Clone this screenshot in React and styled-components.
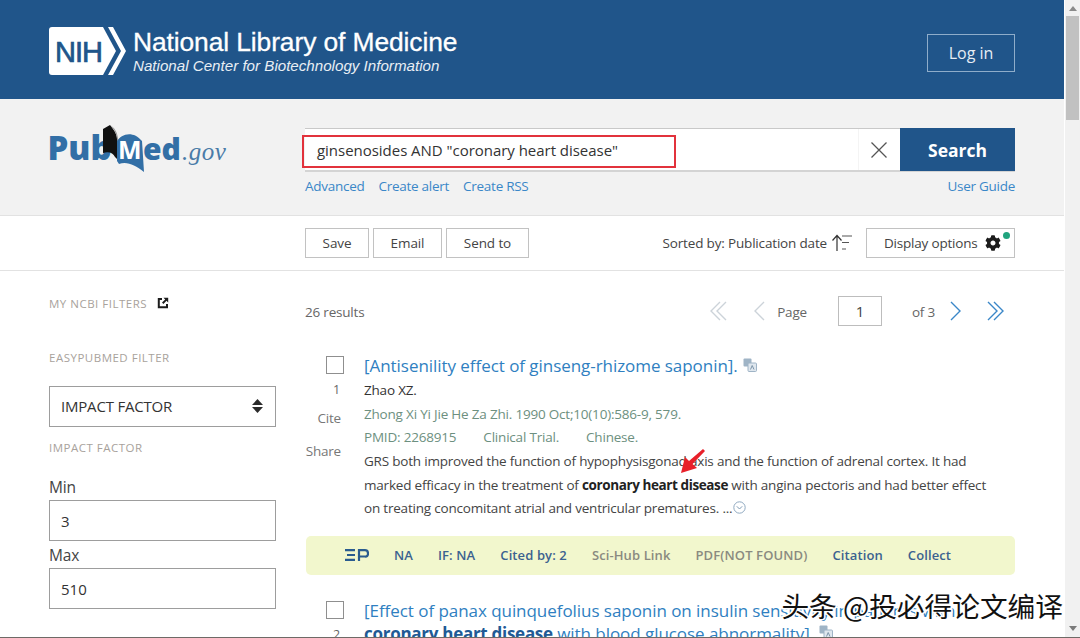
import styled, { createGlobalStyle } from 'styled-components';
import { FaCog } from 'react-icons/fa';

const GlobalStyle = createGlobalStyle`
  html, body {
    margin: 0;
    padding: 0;
    background: #fff;
    overflow: hidden;
  }
  * {
    box-sizing: border-box;
  }
`;

const BODY_FONT = `"Open Sans", "Noto Sans", sans-serif`;

const Page = styled.div`
  position: relative;
  display: flex;
  width: 1080px;
  height: 638px;
  overflow: hidden;
  font-family: ${BODY_FONT};
  color: #333;
`;

const Content = styled.div`
  width: 1064px;
  flex: none;
`;

const ScrollBar = styled.div`
  width: 16px;
  flex: none;
  display: flex;
  flex-direction: column;
  align-items: center;
  background: #f1f1f1;
  border-left: 1px solid #fff;
`;

const ScrollArrow = styled.div`
  width: 0;
  height: 0;
  margin: ${props => props.$down ? "auto 0 7px" : "6px 0 5px"};
  border-left: 4px solid transparent;
  border-right: 4px solid transparent;
  border-bottom: ${props => props.$down ? "none" : "5px solid #8a8a8a"};
  border-top: ${props => props.$down ? "5px solid #7a7a7a" : "none"};
`;

const ScrollThumb = styled.div`
  width: 13px;
  height: 104px;
  background: #c1c1c1;
`;

const TopBar = styled.header`
  height: 99px;
  padding: 0 49px;
  display: flex;
  align-items: center;
  justify-content: space-between;
  background: #20558a;
  color: #fff;
`;

const Brand = styled.div`
  display: flex;
  align-items: center;
  gap: 7px;
  margin-top: 2px;
`;

const BrandText = styled.div`
  font-family: "Liberation Sans", Arial, sans-serif;
  display: flex;
  flex-direction: column;
`;

const BrandTitle = styled.div`
  font-size: 26.4px;
  line-height: 30px;
  letter-spacing: -0.1px;
  -webkit-text-stroke: 0.3px #fff;
`;

const BrandSub = styled.div`
  font-size: 15.15px;
  line-height: 18px;
  font-style: italic;
  color: #e8eef4;
`;

const LoginButton = styled.button`
  width: 88px;
  height: 38px;
  margin-top: 7px;
  background: transparent;
  border: 1px solid #8fadca;
  color: #e6edf4;
  font-family: ${BODY_FONT};
  font-size: 16px;
`;

const SearchBand = styled.section`
  height: 116px;
  padding: 29px 49px 0;
  display: flex;
  background: #f2f2f2;
`;

const LogoSlot = styled.div`
  width: 256px;
  flex: none;
`;

const SearchColumn = styled.div`
  flex: 1;
`;

const SearchForm = styled.div`
  position: relative;
  display: flex;
  height: 44px;
  background: #fff;
  border-top: 1px solid #c9c9c9;
  border-bottom: 2px solid #d4d4d4;
`;

const SearchText = styled.div`
  flex: 1;
  padding-left: 12px;
  font-size: 15px;
  line-height: 42px;
  letter-spacing: -0.03px;
  color: #333;
`;

const RedBox = styled.div`
  position: absolute;
  left: -3px;
  top: 6px;
  width: 374px;
  height: 33px;
  border: 2px solid #e2323c;
`;

const ClearButton = styled.div`
  width: 42px;
  display: flex;
  align-items: center;
  justify-content: center;
  padding-right: 1px;
  border-left: 1px solid #f4f4f4;
`;

const SearchButton = styled.button`
  width: 115px;
  height: 43px;
  margin: -1px 0 0;
  border: none;
  background: #20558a;
  color: #fff;
  font-family: ${BODY_FONT};
  font-weight: 700;
  font-size: 17.5px;
`;

const SearchLinks = styled.div`
  display: flex;
  margin-top: 4px;
  gap: 14px;
`;

const BlueLink = styled.a`
  font-size: 13.5px;
  line-height: 20px;
  letter-spacing: -0.27px;
  color: #3a87c8;
  margin-left: ${props => props.$push ? "auto" : "0"};
`;

const ToolBar = styled.section`
  height: 56px;
  padding: 12px 49px 0 305px;
  display: flex;
  gap: 4px;
  border-top: 1px solid #e2e2e2;
  border-bottom: 1px solid #e2e2e2;
  background: #fff;
`;

const ToolButton = styled.button`
  width: ${props => props.$w}px;
  height: 30px;
  background: #fff;
  border: 1px solid #c2c2c2;
  color: #444;
  font-family: ${BODY_FONT};
  font-size: 13.5px;
  letter-spacing: -0.1px;
  padding: 0;
`;

const SortLabel = styled.div`
  margin-left: auto;
  display: flex;
  align-items: center;
  gap: 4px;
  height: 30px;
  font-size: 13.5px;
  letter-spacing: -0.17px;
  color: #444;
`;

const DisplayButton = styled.div`
  position: relative;
  width: 149px;
  height: 30px;
  margin-left: 10px;
  display: flex;
  align-items: center;
  gap: 7px;
  padding-left: 17px;
  border: 1px solid #c2c2c2;
  font-size: 13.5px;
  letter-spacing: -0.2px;
  color: #444;
`;

const GreenDot = styled.span`
  position: absolute;
  top: 3px;
  right: 4px;
  width: 7px;
  height: 7px;
  border-radius: 50%;
  background: #20a47e;
`;

const Main = styled.main`
  display: flex;
  padding: 0 49px;
`;

const Sidebar = styled.aside`
  width: 227px;
  flex: none;
  padding-top: 23px;
`;

const SideHeading = styled.div`
  display: flex;
  align-items: center;
  gap: 10px;
  height: 18px;
  margin-top: ${props => props.$top || 0}px;
  font-size: 11.5px;
  letter-spacing: 0.5px;
  color: #a8a29c;
`;

const SelectBox = styled.div`
  display: flex;
  align-items: center;
  justify-content: space-between;
  height: 41px;
  margin-top: 20px;
  padding: 0 12px 1px 11px;
  border: 1px solid #9d9d9d;
  font-size: 15px;
  letter-spacing: -0.2px;
  color: #333;
`;

const FieldLabel = styled.div`
  height: 22px;
  margin-top: ${props => props.$top || 0}px;
  font-size: 15.5px;
  line-height: 22px;
  letter-spacing: -0.2px;
  color: #444;
`;

const FieldInput = styled.div`
  height: 41px;
  margin-top: ${props => props.$top || 0}px;
  padding-left: 11px;
  border: 1px solid #9d9d9d;
  font-size: 15px;
  line-height: 40px;
  color: #333;
`;

const Results = styled.div`
  width: 710px;
  margin-left: 29px;
  flex: none;
`;

const ResultsBar = styled.div`
  display: flex;
  align-items: center;
  height: 30px;
  margin-top: 25px;
  font-size: 13.5px;
  letter-spacing: -0.2px;
  color: #666;
`;

const BarText = styled.span`
  padding-top: 2px;
`;

const Pager = styled.div`
  margin-left: auto;
  display: flex;
  align-items: center;
  padding-right: 9px;
`;

const PageInput = styled.div`
  width: 44px;
  height: 30px;
  margin: 0 30px 0 31px;
  border: 1px solid #bdbdbd;
  text-align: center;
  font-size: 15px;
  line-height: 28px;
  color: #444;
`;

const PagerIcon = styled.svg`
  display: block;
  flex: none;
  margin-left: ${props => props.$ml || 0}px;
  margin-right: ${props => props.$mr || 0}px;
`;

const Article = styled.article`
  display: flex;
  margin-top: ${props => props.$top || 0}px;
`;

const Gutter = styled.div`
  width: 59px;
  flex: none;
  display: flex;
  flex-direction: column;
  align-items: flex-end;
  padding-right: 20px;
  font-size: 13.5px;
  letter-spacing: -0.2px;
  color: #777;
`;

const CheckBox = styled.div`
  width: 18px;
  height: 18px;
  margin-top: 2px;
  border: 1px solid #8f8f8f;
  background: #fff;
`;

const ArticleNumber = styled.div`
  margin-top: 6px;
  margin-right: 4px;
  font-size: 12.5px;
  line-height: 20px;
  color: #666;
`;

const GutterAction = styled.div`
  line-height: 20px;
  margin-top: ${props => props.$top}px;
  margin-right: 3px;
  color: #777;
`;

const ArticleBody = styled.div`
  flex: 1;
  font-size: 13.5px;
  letter-spacing: -0.2px;
`;

const ArticleTitle = styled.div`
  display: flex;
  align-items: center;
  gap: 5px;
  font-size: 17px;
  line-height: 23px;
  letter-spacing: -0.05px;
  color: #2f7fc1;
  white-space: nowrap;
  svg {
    margin-top: -2px;
  }
`;

const Emphasis = styled.b`
  font-weight: 700;
  letter-spacing: -0.28px;
  color: #205a95;
`;

const Authors = styled.div`
  line-height: 25px;
  margin-top: 1px;
  color: #333;
`;

const MetaLine = styled.div`
  display: flex;
  gap: 27px;
  line-height: 23px;
  color: #6d9080;
`;

const Abstract = styled.div`
  margin-top: 1px;
  line-height: 23.6px;
  color: #444;
  width: 640px;
  b {
    color: #222;
    font-weight: 700;
    letter-spacing: -0.4px;
  }
`;

const ToolStrip = styled.div`
  display: flex;
  align-items: center;
  height: 39px;
  margin: 15px 0 0 1px;
  padding-left: 39px;
  background: #f2f7cd;
  border-radius: 5px;
`;

const StripItem = styled.span`
  margin-left: 25px;
  font-size: 13px;
  font-weight: 600;
  letter-spacing: 0.11px;
  white-space: nowrap;
  color: ${props => props.$muted ? "#8a8a80" : "#3b6290"};
`;

const Watermark = styled.div`
  position: absolute;
  right: 17px;
  top: 588px;
  font-family: "Noto Sans CJK SC", sans-serif;
  font-size: 27.7px;
  line-height: 34px;
  white-space: nowrap;
  color: #111;
  -webkit-text-stroke: 3px #fff;
  paint-order: stroke fill;
`;

const PhotoEdge = styled.div`
  position: absolute;
  left: 0;
  right: 0;
  bottom: 0;
  height: 1px;
  background: #6e6a66;
`;

const RedArrow = styled.svg`
  position: absolute;
  left: 678px;
  top: 448px;
`;

function NihLogo() {
  return (
    <svg width="77" height="48" viewBox="0 0 77 48">
      <path d="M3 0H54L67 24L54 48H3Q0 48 0 45V3Q0 0 3 0Z" fill="#fff" />
      <path d="M59 0H64L77 24L64 48H59L72 24Z" fill="#fff" />
      <text x="6" y="35" fontFamily="Liberation Sans, sans-serif" fontSize="29" letterSpacing="-1" fill="#20558a" stroke="#20558a" strokeWidth="0.7">NIH</text>
    </svg>
  );
}

function PubMedLogo() {
  return (
    <svg width="190" height="50" viewBox="0 0 190 50" style={{ display: 'block', marginTop: -5 }}>
      <text x="-1.500" y="37" fontFamily="Open Sans, sans-serif" fontWeight="800" fontSize="33" fill="#326fa6">Pub</text>
      <path d="M54 6L61 2C66 8 68 12 68 16V36L66 34C64 30 60 28 54 30Z" fill="#111" />
      <path d="M61 2C66 5 68 9 69 15V36L68 38V16C68 12 66 7 61 2Z" fill="#999" />
      <path d="M68 18C72 11 84 7 93 18L95 49C86 42 78 38 70 41L68 38Z" fill="#326fa6" />
      <text x="69" y="36" fontFamily="Open Sans, sans-serif" fontWeight="700" fontSize="25" fill="#fff">M</text>
      <text x="94" y="37" fontFamily="Open Sans, sans-serif" fontWeight="800" fontSize="30" fill="#326fa6">ed</text>
      <text x="133" y="37" fontFamily="Liberation Serif, serif" fontStyle="italic" fontSize="25" fill="#4a7ba8" letterSpacing="0.5">.gov</text>
    </svg>
  );
}

function CloseIcon() {
  return (
    <svg width="18" height="18" viewBox="0 0 18 18">
      <path d="M1.5 1.5L16.5 16.5M16.5 1.5L1.5 16.5" stroke="#555" strokeWidth="1.3" fill="none" />
    </svg>
  );
}

function SortIcon() {
  return (
    <svg width="21" height="18" viewBox="0 0 21 18">
      <path d="M6 17V2M1.5 6.5L6 1.5L10.5 6.5" stroke="#333" strokeWidth="1.2" fill="none" />
      <path d="M11 2H21M11 8.5H18M11 15H15" stroke="#555" strokeWidth="1.2" fill="none" />
    </svg>
  );
}

function ExternalIcon() {
  return (
    <svg width="12" height="12" viewBox="0 0 12 12">
      <path d="M5 1H0.8V11.2H11V7H9V9.2H2.8V3H5Z" fill="#1c1c1c" />
      <path d="M6.5 0.8H11.2V5.5L9.5 3.8L6.4 7L5 5.6L8.2 2.5Z" fill="#1c1c1c" />
    </svg>
  );
}

function SelectArrows() {
  return (
    <svg width="11" height="14" viewBox="0 0 11 14">
      <path d="M5.5 0L11 6H0Z" fill="#2b2b2b" />
      <path d="M5.5 14L11 8H0Z" fill="#2b2b2b" />
    </svg>
  );
}

function Chevron({ color, flip, double, ml, mr }) {
  const w = double ? 20 : 14;
  return (
    <PagerIcon width={w} height="20" viewBox={`0 0 ${w} 20`} $ml={ml} $mr={mr} style={flip ? { transform: 'scaleX(-1)' } : undefined}>
      <path d="M2 1L11 10L2 19" stroke={color} strokeWidth="1.4" fill="none" />
      {double && <path d="M8 1L17 10L8 19" stroke={color} strokeWidth="1.4" fill="none" />}
    </PagerIcon>
  );
}

function TranslateIcon() {
  return (
    <svg width="14" height="14" viewBox="0 0 14 14">
      <rect x="0.5" y="0.5" width="8" height="8" rx="1" fill="#9fb4c6" />
      <rect x="5" y="5" width="8.5" height="8.5" rx="1" fill="#dfe7ee" stroke="#9fb4c6" />
      <path d="M7.5 11.5L9.2 7.5L11 11.5" stroke="#7d95aa" fill="none" />
    </svg>
  );
}

function ExpandIcon() {
  return (
    <svg width="13" height="13" viewBox="0 0 13 13" style={{ verticalAlign: -1, marginLeft: -3 }}>
      <circle cx="6.5" cy="6.5" r="5.7" stroke="#8fa9c0" fill="#fff" />
      <path d="M3.8 5.3L6.5 8L9.2 5.3" stroke="#7f9ab3" fill="none" />
    </svg>
  );
}

function EpLogo() {
  return (
    <svg width="24" height="12" viewBox="0 0 24 12">
      <path d="M0 1.200H10M2 6H10M0 10.800H10" stroke="#2a5c8f" strokeWidth="2.200" fill="none" />
      <path d="M14 12V1.200H20Q23 1.200 23 4.500T20 7.500H15" stroke="#2a5c8f" strokeWidth="2.200" fill="none" />
    </svg>
  );
}

const STRIP_ITEMS = [
  { label: 'NA' },
  { label: 'IF: NA' },
  { label: 'Cited by: 2' },
  { label: 'Sci-Hub Link', muted: true },
  { label: 'PDF(NOT FOUND)', muted: true },
  { label: 'Citation' },
  { label: 'Collect' },
];

function App() {
  return (
    <Page>
      <GlobalStyle />
      <Content>
        <TopBar>
          <Brand>
            <NihLogo />
            <BrandText>
              <BrandTitle>National Library of Medicine</BrandTitle>
              <BrandSub>National Center for Biotechnology Information</BrandSub>
            </BrandText>
          </Brand>
          <LoginButton>Log in</LoginButton>
        </TopBar>

        <SearchBand>
          <LogoSlot><PubMedLogo /></LogoSlot>
          <SearchColumn>
            <SearchForm>
              <SearchText>ginsenosides AND "coronary heart disease"</SearchText>
              <RedBox />
              <ClearButton><CloseIcon /></ClearButton>
              <SearchButton>Search</SearchButton>
            </SearchForm>
            <SearchLinks>
              <BlueLink>Advanced</BlueLink>
              <BlueLink>Create alert</BlueLink>
              <BlueLink>Create RSS</BlueLink>
              <BlueLink $push>User Guide</BlueLink>
            </SearchLinks>
          </SearchColumn>
        </SearchBand>

        <ToolBar>
          <ToolButton $w={64}>Save</ToolButton>
          <ToolButton $w={69}>Email</ToolButton>
          <ToolButton $w={83}>Send to</ToolButton>
          <SortLabel>Sorted by: Publication date <SortIcon /></SortLabel>
          <DisplayButton>
            Display options <FaCog size={16} color="#1c1c1c" />
            <GreenDot />
          </DisplayButton>
        </ToolBar>

        <Main>
          <Sidebar>
            <SideHeading>MY NCBI FILTERS <ExternalIcon /></SideHeading>
            <SideHeading $top={36}>EASYPUBMED FILTER</SideHeading>
            <SelectBox>IMPACT FACTOR <SelectArrows /></SelectBox>
            <SideHeading $top={11}>IMPACT FACTOR</SideHeading>
            <FieldLabel $top={20}>Min</FieldLabel>
            <FieldInput $top={2}>3</FieldInput>
            <FieldLabel $top={3}>Max</FieldLabel>
            <FieldInput $top={2}>510</FieldInput>
          </Sidebar>

          <Results>
            <ResultsBar>
              <BarText>26 results</BarText>
              <Pager>
                <Chevron double flip color="#ccd3d9" mr={24} />
                <Chevron flip color="#ccd3d9" mr={11} />
                <BarText>Page</BarText>
                <PageInput>1</PageInput>
                <BarText>of 3</BarText>
                <Chevron color="#3a87c8" ml={14} />
                <Chevron double color="#3a87c8" ml={23} />
              </Pager>
            </ResultsBar>

            <Article $top={28}>
              <Gutter>
                <CheckBox />
                <ArticleNumber>1</ArticleNumber>
                <GutterAction $top={8}>Cite</GutterAction>
                <GutterAction $top={13}>Share</GutterAction>
              </Gutter>
              <ArticleBody>
                <ArticleTitle>[Antisenility effect of ginseng-rhizome saponin]. <TranslateIcon /></ArticleTitle>
                <Authors>Zhao XZ.</Authors>
                <MetaLine>Zhong Xi Yi Jie He Za Zhi. 1990 Oct;10(10):586-9, 579.</MetaLine>
                <MetaLine>
                  <span>PMID: 2268915</span>
                  <span>Clinical Trial.</span>
                  <span>Chinese.</span>
                </MetaLine>
                <Abstract>
                  GRS both improved the function of hypophysisgonad axis and the function of adrenal cortex. It had marked efficacy in the treatment of <b>coronary heart disease</b> with angina pectoris and had better effect on treating concomitant atrial and ventricular prematures. ... <ExpandIcon />
                </Abstract>
              </ArticleBody>
            </Article>

            <ToolStrip>
              <EpLogo />
              {STRIP_ITEMS.map(item =>
                <StripItem key={item.label} $muted={item.muted}>{item.label}</StripItem>
              )}
            </ToolStrip>

            <Article $top={24}>
              <Gutter>
                <CheckBox />
                <ArticleNumber>2</ArticleNumber>
              </Gutter>
              <ArticleBody>
                <ArticleTitle>[Effect of panax quinquefolius saponin on insulin sensitivity in patients with</ArticleTitle>
                <ArticleTitle><span><Emphasis>coronary heart disease</Emphasis> with blood glucose abnormality].</span> <TranslateIcon /></ArticleTitle>
              </ArticleBody>
            </Article>
          </Results>
        </Main>
      </Content>

      <ScrollBar>
        <ScrollArrow />
        <ScrollThumb />
        <ScrollArrow $down />
      </ScrollBar>

      <RedArrow width="30" height="28" viewBox="0 0 30 28">
        <path d="M27 3L25 1L11 13L7 9L3 25L19 20L14.500 16Z" fill="#e8202a" />
      </RedArrow>
      <Watermark>头条 @投必得论文编译</Watermark>
      <PhotoEdge />
    </Page>
  );
}

export default App;
